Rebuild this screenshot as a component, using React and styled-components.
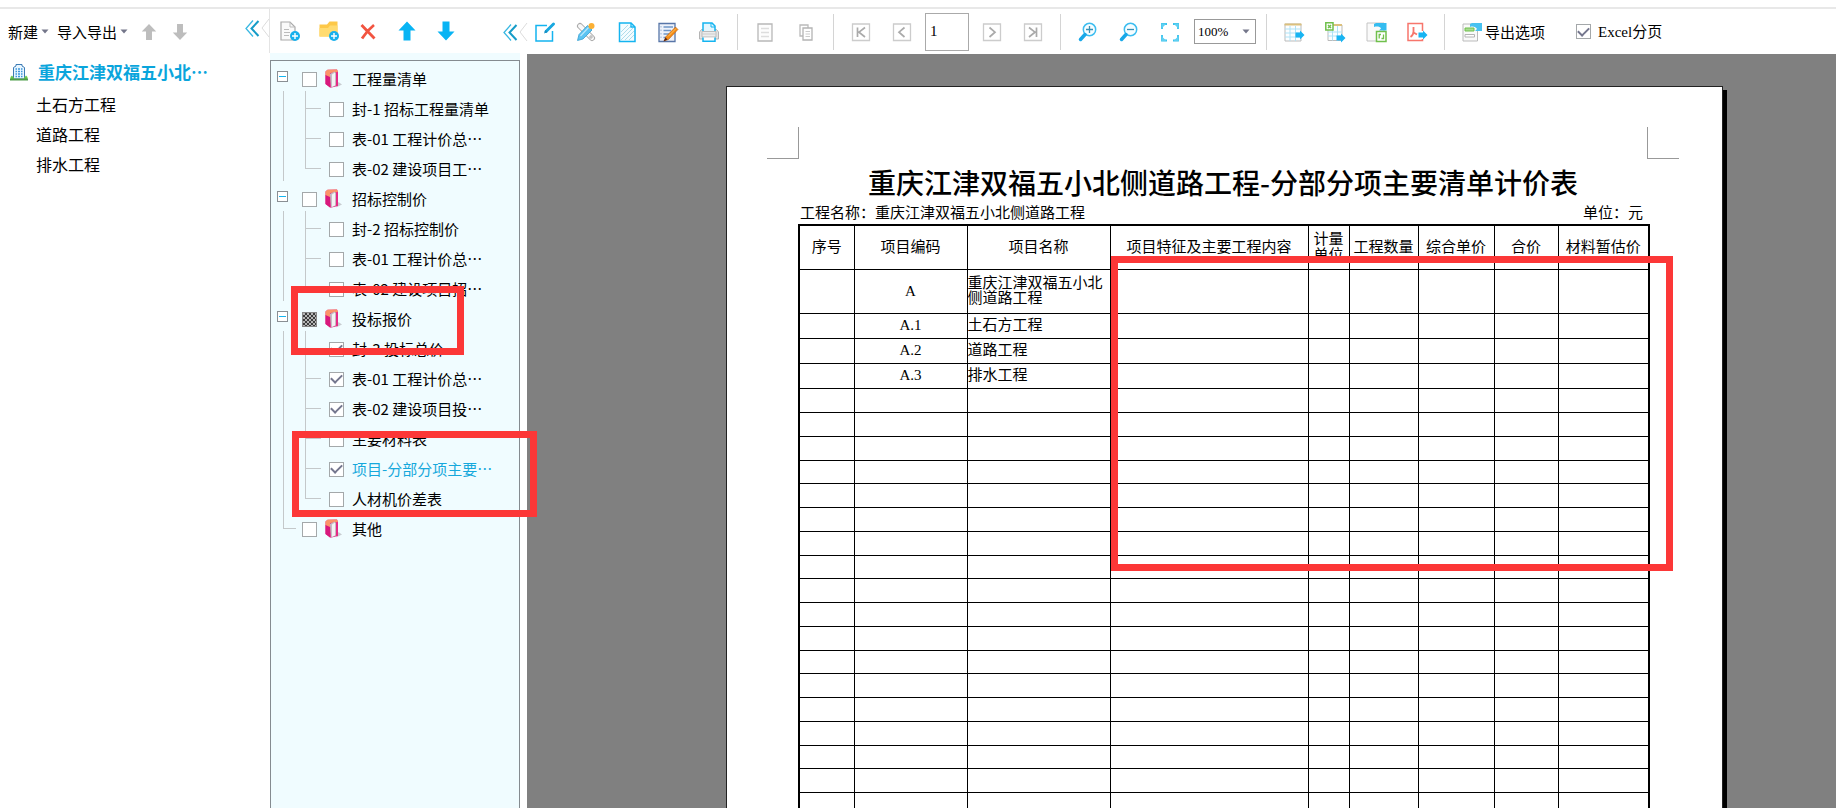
import React from "react";
import styled, { createGlobalStyle, css } from "styled-components";

const sans = `"Noto Sans CJK SC", sans-serif`;
const serif = `"Liberation Serif", "Noto Sans CJK SC", serif`;
const blue = "#14b4f0";
const lineGray = "#c4c8ca";

const GlobalStyle = createGlobalStyle`
    * {
        box-sizing: border-box;
    }
    body {
        margin: 0;
        background: #fff;
        color: #000;
        font: 15px/20px ${sans};
    }
    button, input, select {
        font: inherit;
        color: inherit;
    }
    ul {
        list-style: none;
        margin: 0;
        padding: 0;
    }
`;

const Shell = styled.div`
    display: flex;
    flex-direction: column;
    height: 100vh;
    overflow: hidden;
`;

const TopStrip = styled.header`
    flex: none;
    height: 9px;
    border-bottom: 2px solid #e8e8e8;
`;

const Workspace = styled.div`
    display: flex;
    flex: 1;
    min-height: 0;
`;

const Toolbar = styled.div`
    display: flex;
    flex: none;
    align-items: center;
    height: 45px;
`;

const IconButton = styled.button`
    display: flex;
    flex: none;
    width: 20px;
    height: 20px;
    padding: 0;
    border: 0;
    background: none;
`;

const TextButton = styled.button`
    display: flex;
    align-items: center;
    gap: 3px;
    padding: 0;
    border: 0;
    background: none;
    white-space: nowrap;
`;

const Svg = styled.svg`
    display: block;
    flex: none;
    overflow: visible;
    fill: none;
`;

const Check = styled.input.attrs({ type: "checkbox" })`
    appearance: none;
    flex: none;
    width: 15px;
    height: 15px;
    margin: 0;
    border: 1px solid #a4a8aa;
    background: #fff;
    display: grid;
    place-items: center;
    &:checked::after {
        content: "";
        width: 9px;
        height: 5px;
        margin-bottom: 3px;
        border-left: 2px solid #74768e;
        border-bottom: 2px solid #74768e;
        transform: rotate(-45deg);
    }
    ${props => props.$mixed && css`
        border-color: #888;
        background: repeating-conic-gradient(#3c3c3c 0 25%, #b4b4b4 0 50%) 0 0 / 4px 4px;
    `}
`;

/* project panel */

const ProjectPanel = styled.aside`
    flex: 0 0 269px;
    min-width: 0;
`;

const ProjectToolbar = styled(Toolbar)`
    padding-left: 8px;
    gap: 8px;
`;

const ArrowPair = styled.div`
    display: flex;
    gap: 11px;
    margin-left: 3px;
`;

const Collapse = styled(IconButton)`
    width: 24px;
    margin-left: auto;
    align-self: ${props => props.$top ? "flex-start" : "center"};
    margin-top: ${props => props.$top ? "10px" : "4px"};
`;

const ProjectTitle = styled.div`
    display: flex;
    align-items: center;
    gap: 10px;
    height: 35px;
    padding-left: 10px;
    font-size: 17px;
    font-weight: 700;
    color: #0aa5dc;
    white-space: nowrap;
`;

const ProjectItem = styled.li`
    padding-left: 36px;
    font-size: 16px;
    line-height: 30px;
`;

/* report tree panel */

const ReportPanel = styled.aside`
    display: flex;
    flex-direction: column;
    flex: 0 0 258px;
    position: relative;
    z-index: 1;
`;

const ReportToolbar = styled(Toolbar)`
    height: 44px;
    padding-left: 10px;
    gap: 19px;
    border-left: 1px solid #e4e4e4;
`;

const Tree = styled.div`
    flex: 1;
    position: relative;
    margin: 0 7px 0 1px;
    border: 1px solid #858b90;
    border-bottom: 0;
    background: #f0fcff;
`;

const TreeBand = styled.div`
    flex: none;
    height: 7px;
    margin: 0 7px 0 1px;
    background: #f0fcff;
`;

const Row = styled.div`
    display: flex;
    align-items: center;
    height: 30px;
    padding-left: ${props => props.$head ? "6px" : "12px"};
`;

const Toggle = styled.button`
    display: grid;
    place-items: center;
    flex: none;
    width: 11px;
    height: 11px;
    margin-right: 14px;
    padding: 0;
    border: 1px solid #8a8f94;
    background: #fff;
    &::after {
        content: "";
        width: 7px;
        height: 1px;
        background: ${blue};
    }
`;

const Trunk = styled.span`
    flex: none;
    align-self: stretch;
    width: 22px;
    border-left: 1px solid ${lineGray};
`;

const Elbow = styled.span`
    flex: none;
    align-self: stretch;
    width: ${props => props.$short ? "13px" : "16px"};
    margin-right: ${props => props.$short ? "6px" : "8px"};
    &::before, &::after {
        content: "";
        display: block;
        border-left: 1px solid ${lineGray};
    }
    &::before {
        height: 17px;
        border-bottom: 1px solid ${lineGray};
    }
    &::after {
        height: ${props => props.$last ? "0" : "13px"};
    }
`;

const Entry = styled.label`
    display: flex;
    align-items: center;
    gap: 8px;
    padding-top: 6px;
    color: ${props => props.$active ? "#16a8dc" : "inherit"};
    white-space: nowrap;
`;

const EntryName = styled.span`
    padding-left: ${props => props.$head ? "2px" : "0"};
`;

const Marker = styled.div`
    position: absolute;
    border: 7px solid #fc3737;
    pointer-events: none;
    ${props => props.$area}
`;

/* preview */

const Preview = styled.main`
    display: flex;
    flex-direction: column;
    flex: 1;
    min-width: 0;
`;

const ToolGroup = styled.div`
    display: flex;
    align-items: center;
    gap: 21px;
    height: 36px;
    padding: 0 17px;
    border-left: 1px solid #d4d4d4;
    &:first-child {
        padding: 0 18px 0 8px;
        border-left: 0;
    }
`;

const PageInput = styled.input`
    width: 44px;
    height: 38px;
    margin: 0 -8px;
    padding: 0 4px;
    border: 1px solid #aaa;
    font: 15px/20px ${serif};
`;

const ZoomBox = styled.div`
    display: grid;
    align-items: center;
    width: 62px;
    margin: 0 -7px;
    > * {
        grid-area: 1 / 1;
    }
    > svg {
        justify-self: end;
        margin-right: 6px;
        pointer-events: none;
    }
`;

const ZoomSelect = styled.select`
    appearance: none;
    height: 25px;
    padding: 0 3px;
    border: 1px solid #999;
    border-radius: 0;
    background: #fff;
    font: 13px/20px ${serif};
`;

const CheckLabel = styled.label`
    display: flex;
    align-items: center;
    gap: 7px;
    margin-left: 10px;
    font-family: ${serif};
    white-space: nowrap;
`;

const Canvas = styled.div`
    display: flex;
    flex: 1;
    align-items: flex-start;
    min-height: 0;
    padding: 32px 113px 0 199px;
    background: #808080;
    overflow: hidden;
`;

const Paper = styled.article`
    flex: 1;
    min-width: 0;
    border: 1px solid #222;
    background: #fff;
    box-shadow: 4px 4px 0 #000;
`;

const CropMarks = styled.div`
    display: flex;
    justify-content: space-between;
    padding: 40px 43px 0 40px;
`;

const CropMark = styled.span`
    width: 32px;
    height: 32px;
    border-bottom: 1px solid #999;
    ${props => props.$right ? "border-left" : "border-right"}: 1px solid #999;
`;

const Sheet = styled.div`
    position: relative;
    padding: 5px 74px 0 71px;
`;

const SheetTitle = styled.h1`
    margin: 0;
    font-size: 28px;
    font-weight: 500;
    line-height: 36px;
    text-align: center;
    white-space: nowrap;
`;

const SheetInfo = styled.div`
    display: flex;
    justify-content: space-between;
    padding: 0 5px 0 2px;
    line-height: 24px;
`;

const Table = styled.table`
    width: 100%;
    table-layout: fixed;
    border-collapse: collapse;
    border: 2px solid #000;
    font: 15px/15px ${serif};
    th, td {
        padding: 0;
        border: 1px solid #000;
        font-weight: 400;
    }
    th {
        line-height: 16px;
    }
`;

const Tr = styled.tr`
    height: ${props => props.$height}px;
`;

const Td = styled.td`
    text-align: ${props => props.$align || "left"};
`;

const Icon = ({ children, ...rest }) => (
    <Svg width="20" height="20" viewBox="0 0 20 20" aria-hidden="true" {...rest}>{children}</Svg>
);

const Caret = () => (
    <Svg width="8" height="5" viewBox="0 0 8 5" aria-hidden="true"><path d="M0.5 0.5h7L4 4.5z" fill="#74768a" /></Svg>
);

const Arrow = ({ down, color, small }) => (
    <Icon>
        <g transform={`${down ? "rotate(180 10 10)" : ""} ${small ? "translate(1.5 1.5) scale(.85)" : ""}`}>
            <path d="M10 0.5L18.5 9.5H13.5V19.5H6.5V9.5H1.5z" fill={color} />
        </g>
    </Icon>
);

const Chevrons = () => (
    <Svg width="24" height="20" viewBox="0 0 24 20" aria-hidden="true">
        <path d="M8 1.5L1 9.5L8 17.5" stroke="#3ab8e2" strokeWidth="1.3" />
        <path d="M13.5 2L6.5 9.5L13.5 17" stroke="#159cc8" strokeWidth="2" />
        <path d="M24 0L17 9L24 18" stroke="#dcdcdc" />
    </Svg>
);

const Building = () => (
    <Svg width="18" height="18" viewBox="0 0 18 18" aria-hidden="true">
        <path d="M3.5 16V4.5L6 3V1.5h6V3l2.500 1.500V16z" fill="#e8f6ff" stroke="#3c7ab4" />
        <path d="M5.500 6h7M5.500 8.500h7M5.500 11h7M5.500 13.500h7" stroke="#3c96dc" strokeWidth="1.500" />
        <path d="M7.500 4v11M10.500 4v11" stroke="#e8f6ff" />
        <path d="M0.500 16.500V14l1.500-1.500L4 15v1.500zM17.500 16.500V14L16 12.500L14 15v1.500z" fill="#6cc84c" />
        <path d="M0 16.500h18" stroke="#4c9c48" strokeWidth="2" />
    </Svg>
);

const Folder = () => (
    <Svg width="17" height="20" viewBox="0 0 17 20" aria-hidden="true">
        <path d="M11 18.500L17 15.500L13.500 13z" fill="#c8ccd0" />
        <path d="M0.500 2.500L2.500 0.800L12 0.500L13 3V17L5.500 18.800L0.500 15z" fill="#e62a86" />
        <path d="M0.500 2.500L2.500 0.800L12 0.500L13 3L5 4V9L0.500 7z" fill="#fb9468" />
        <path d="M0.500 6L5 8V18.500L0.500 15z" fill="#d8187c" />
        <path d="M5 5L9.500 2.500L11 4V16.500L6 18.500z" fill="#c4c0c4" />
        <path d="M7 5.500L10 3.500V16.500L7 17.800z" fill="#f4f2f4" />
    </Svg>
);

const PlusBadge = () => (
    <>
        <circle cx="15" cy="15" r="5" fill="#18b0ec" />
        <path d="M12 15h6M15 12v6" stroke="#fff" strokeWidth="1.400" />
    </>
);

const FileAdd = () => (
    <Icon>
        <path d="M1 1h9l5 5v13H1z" fill="#fafafa" stroke="#aaa" strokeWidth="1.200" />
        <path d="M10 1v5h5M4 8.500h5M4 11.500h6M4 14.500h5" stroke="#bbb" />
        <PlusBadge />
    </Icon>
);

const FolderAdd = () => (
    <Icon>
        <path d="M0.500 3.500H8L10.500 0.500H18.500V15.500H0.500z" fill="#fdc848" />
        <path d="M0.500 7H9L11 4.500H18.500V15.500H0.500z" fill="#ffdb70" />
        <PlusBadge />
    </Icon>
);

const Remove = () => (
    <Icon>
        <path d="M3.500 4L16.500 17.500M16 4C11 8 7.500 12 4 17.500" stroke="#f25440" strokeWidth="2.800" />
    </Icon>
);

const EditBox = () => (
    <Icon>
        <path d="M12 3.500H1V19H17.500V9" stroke={blue} strokeWidth="1.500" />
        <path d="M18.500 2L11 9.500" stroke="#18a8e0" strokeWidth="3" strokeLinecap="round" />
        <path d="M10.500 8L12.500 10L9 11.500z" fill="#168cc0" />
    </Icon>
);

const Tools = () => (
    <Icon>
        <path d="M4 4L16 16" stroke="#aaa" strokeWidth="6" strokeLinecap="round" />
        <path d="M4 4L16 16" stroke="#f8f8f8" strokeWidth="4" strokeLinecap="round" />
        <circle cx="15" cy="15" r="1.200" stroke="#aaa" />
        <path d="M1.500 18.500L3 12.500L11.500 3.500L16 8L7 17z" fill="#5cc4f2" stroke="#38a0d0" strokeWidth=".8" />
        <path d="M4.500 14L12.500 5.500" stroke="#b8e8fc" strokeWidth="1.200" />
        <circle cx="15.500" cy="4" r="3" fill="#fbb034" />
    </Icon>
);

const Hatch = () => (
    <Icon>
        <path d="M2.500 1H14L18 5V19.500H2.500z" fill="#f4fcff" stroke={blue} strokeWidth="1.500" />
        <path d="M4 10L11 3M4 14L14 4M4 18L16 6M8 18L17 9M12 18L17 13" stroke="#a8d8e8" strokeWidth=".9" />
        <path d="M14 1V5H18" stroke={blue} strokeWidth="1.300" />
    </Icon>
);

const Notepad = () => (
    <Icon>
        <path d="M1 1.500H17V19.500H1z" fill="#eef2fa" stroke="#5876a8" strokeWidth="1.300" />
        <path d="M5.500 5H15M5.500 8.500H13M5.500 12H11M5.500 15.500H8" stroke="#6f96c8" strokeWidth="1.300" />
        <path d="M3 4v14" stroke="#9bb0d0" strokeDasharray="1.500 2" />
        <path d="M6 19L8 14.500L17.500 5L20 7.500L10.500 17.500z" fill="#f58c14" stroke="#a8500c" strokeWidth=".5" />
        <path d="M10 14.500L18 6.500" stroke="#fcc060" />
        <path d="M5.500 19.500L7.500 15.500L9.500 17.500z" fill="#552210" />
    </Icon>
);

const Printer = () => (
    <Icon>
        <path d="M2.500 7.500H17.500L19.500 10V17H0.500V10z" fill="#e4e4e4" stroke="#b4b4b4" />
        <path d="M4 12V1H13L16 4V12" fill="#e4f6fe" stroke={blue} strokeWidth="1.500" />
        <path d="M12 1V5H16" stroke={blue} />
        <path d="M3 9.500H17V15H3z" fill="#ececec" stroke="#bbb" />
        <path d="M3 12H17" stroke="#ccc" />
        <path d="M4 15.500V19.200H16V15.500" fill="#fff" stroke={blue} strokeWidth="1.500" />
    </Icon>
);

const SinglePage = () => (
    <Icon>
        <path d="M3 2H17V19H3z" fill="#fdfdfd" stroke="#b8b8b8" strokeWidth="1.300" />
        <path d="M6 6.500H14M6 10.500H14M6 14.500H14" stroke="#ddd" strokeWidth="1.300" />
    </Icon>
);

const Copies = () => (
    <Icon>
        <path d="M4 3H12V14H4z" fill="#fff" stroke="#bbb" strokeWidth="1.300" />
        <path d="M7 6H16V18H7z" fill="#fff" stroke="#b4b4b4" strokeWidth="1.300" />
        <path d="M9.500 9.500H14M9.500 12H14M9.500 14.500H14" stroke="#ccc" />
    </Icon>
);

const Nav = ({ d }) => (
    <Icon>
        <path d="M1.500 2H18.500V18.500H1.500z" stroke="#ccc" strokeWidth="1.300" />
        <path d={d} stroke="#aaa" strokeWidth="1.700" />
    </Icon>
);

const Magnifier = ({ plus }) => (
    <Icon>
        <circle cx="11.500" cy="7.500" r="6.200" fill="#f6fdff" stroke="#3cbdf0" strokeWidth="1.500" />
        <path d={plus ? "M8 7.500h7M11.500 4v7" : "M8 7.500h7"} stroke="#3890b4" strokeWidth="1.300" />
        <path d="M7 12.500L2.500 17.500" stroke="#18a8e8" strokeWidth="3.500" strokeLinecap="round" />
    </Icon>
);

const Fit = () => (
    <Icon>
        <path d="M2 7V2H7M13 2H18V7M18 13V18.500H13M7 18.500H2V13" stroke="#34c0ec" strokeWidth="1.800" />
        <path d="M1.500 1.500h5l-5 5zM18.500 1.500v5l-5-5zM18.500 19h-5l5-5zM1.500 19v-5l5 5z" fill="#5ed0f2" />
    </Icon>
);

const MiniArrow = () => <path d="M11.500 10.500H16V8.500L20.500 13L16 17.500V15.500H11.500z" fill="#18b4f2" />;

const ExportTable = () => (
    <Icon>
        <path d="M1 2H17V19H1z" fill="#fcfeff" stroke="#bbb" />
        <path d="M1 7H17M1 11H17M1 15H17M6 4V19M11.500 4V19" stroke="#aee2f6" />
        <path d="M0.500 2.500H17.500" stroke="#dcc07c" strokeWidth="2" />
        <MiniArrow />
    </Icon>
);

const ExportExcel = () => (
    <Icon>
        <path d="M3 3H17V18.500H3z" fill="#fcfeff" stroke="#bbb" />
        <path d="M3 10H17M3 14H17M7.500 8V18.500M12.500 4V18.500" stroke="#aee2f6" />
        <path d="M8 3H17" stroke="#dcc07c" strokeWidth="2" />
        <path d="M0.800 0.800H8V8H0.800z" fill="#fff" stroke="#70c04c" strokeWidth="1.500" />
        <path d="M3 3l3 3M6 3l-3 3" stroke="#70c04c" strokeWidth="1.500" />
        <g transform="translate(0 3)"><MiniArrow /></g>
    </Icon>
);

const ExportSheet = () => (
    <Icon>
        <path d="M1 1H18V19H1z" fill="#fafafa" stroke="#c4c4c4" />
        <path d="M8 2L10 1H20.500V8.500H13L15 6.500C14 4.500 11 4 8 5z" fill="#34bcf0" />
        <path d="M10.500 9.500H20V19.500H10.500z" fill="#fff" stroke="#70c04c" strokeWidth="1.500" />
        <path d="M13.200 16.500V12.500H15M17.500 12.500V16.500H15.500" stroke="#70c04c" strokeWidth="1.300" />
    </Icon>
);

const ExportPdf = () => (
    <Icon>
        <path d="M15.500 9V1.500H1V18.500H15.500V17" stroke="#f7766c" strokeWidth="1.500" />
        <path d="M6.500 5V9.500C6.500 12 5 14 3.500 15M6.500 10.500L10 12.500" stroke="#f7766c" strokeWidth="1.800" />
        <MiniArrow />
    </Icon>
);

const ExportOptions = () => (
    <Icon>
        <path d="M1 2H15.500V19H1z" fill="#fafafa" stroke="#bbb" />
        <path d="M3 6H12V9H3z" fill="#a8dc90" stroke="#70c04c" />
        <path d="M3 12.500H12.500V15H3z" fill="#fff" stroke="#b4b4b4" />
        <path d="M8 2L10 1H20V9H13L15 7C14 5 11 4 8 5z" fill="#48c2f0" />
    </Icon>
);

const projects = ["土石方工程", "道路工程", "排水工程"];

const groups = [
    {
        name: "工程量清单",
        items: [["封-1 招标工程量清单"], ["表-01 工程计价总…"], ["表-02 建设项目工…"]]
    },
    {
        name: "招标控制价",
        items: [["封-2 招标控制价"], ["表-01 工程计价总…"], ["表-02 建设项目招…"]]
    },
    {
        name: "投标报价",
        mixed: true,
        items: [
            ["封-3 投标总价", true],
            ["表-01 工程计价总…", true],
            ["表-02 建设项目投…", true],
            ["主要材料表"],
            ["项目-分部分项主要…", true, true],
            ["人材机价差表"]
        ]
    }
];

const columns = [
    ["序号", 55],
    ["项目编码", 113],
    ["项目名称", 143],
    ["项目特征及主要工程内容", 198],
    ["计量单位", 41],
    ["工程数量", 69],
    ["综合单价", 76],
    ["合价", 64],
    ["材料暂估价", 91]
];

const lines = [
    ["A", "重庆江津双福五小北侧道路工程", 44],
    ["A.1", "土石方工程", 25],
    ["A.2", "道路工程", 25],
    ["A.3", "排水工程", 25],
    // blank rows fill the sheet, every fourth one is a pixel shorter
    ...Array.from({ length: 20 }, (_, i) => ["", "", i % 4 === 3 ? 23 : 24])
];

const reportTools = [
    ["新建报表", <FileAdd />],
    ["新建文件夹", <FolderAdd />],
    ["删除", <Remove />],
    ["上移", <Arrow color="#08b4f4" />],
    ["下移", <Arrow down color="#08b4f4" />]
];

const Tool = ({ label, children }) => (
    <IconButton type="button" aria-label={label}>{children}</IconButton>
);

const TreeGroup = ({ name, mixed, items }) => (
    <li>
        <Row $head>
            <Toggle type="button" aria-label={name} />
            <Entry>
                <Check $mixed={mixed} />
                <Folder />
                <EntryName $head>{name}</EntryName>
            </Entry>
        </Row>
        <ul>
            {items.map(([text, checked, active], i) => (
                <Row as="li" key={text}>
                    <Trunk />
                    <Elbow $last={i === items.length - 1} />
                    <Entry $active={active}>
                        <Check defaultChecked={checked} />
                        <EntryName>{text}</EntryName>
                    </Entry>
                </Row>
            ))}
        </ul>
    </li>
);

const PriceTable = () => (
    <Table>
        <colgroup>
            {columns.map(([name, width]) => <col key={name} width={width} />)}
        </colgroup>
        <thead>
            <Tr $height={44}>
                {columns.map(([name]) => (
                    <th key={name}>{name === "计量单位" ? <>计量<br />单位</> : name}</th>
                ))}
            </Tr>
        </thead>
        <tbody>
            {lines.map(([code, name, height], i) => (
                <Tr key={i} $height={height}>
                    <Td />
                    <Td $align="center">{code}</Td>
                    <Td>{name}</Td>
                    {columns.slice(3).map(([key]) => <Td key={key} />)}
                </Tr>
            ))}
        </tbody>
    </Table>
);

const App = () => (
    <Shell>
        <GlobalStyle />
        <TopStrip />
        <Workspace>
            <ProjectPanel>
                <ProjectToolbar>
                    <TextButton type="button">新建<Caret /></TextButton>
                    <TextButton type="button">导入导出<Caret /></TextButton>
                    <ArrowPair>
                        <Tool label="上移"><Arrow small color="#bdbdbd" /></Tool>
                        <Tool label="下移"><Arrow small down color="#bdbdbd" /></Tool>
                    </ArrowPair>
                    <Collapse type="button" aria-label="收起" $top><Chevrons /></Collapse>
                </ProjectToolbar>
                <ProjectTitle><Building />重庆江津双福五小北…</ProjectTitle>
                <ul>
                    {projects.map(name => <ProjectItem key={name}>{name}</ProjectItem>)}
                </ul>
            </ProjectPanel>
            <ReportPanel>
                <ReportToolbar>
                    {reportTools.map(([label, icon]) => <Tool key={label} label={label}>{icon}</Tool>)}
                    <Collapse type="button" aria-label="收起"><Chevrons /></Collapse>
                </ReportToolbar>
                <TreeBand />
                <Tree>
                    <ul>
                        {groups.map(group => <TreeGroup key={group.name} {...group} />)}
                        <Row as="li">
                            <Elbow $short $last />
                            <Entry>
                                <Check />
                                <Folder />
                                <EntryName $head>其他</EntryName>
                            </Entry>
                        </Row>
                    </ul>
                    <Marker $area="left: 20px; top: 225px; width: 173px; height: 69px;" />
                    <Marker $area="left: 21px; top: 370px; width: 245px; height: 86px;" />
                </Tree>
            </ReportPanel>
            <Preview>
                <Toolbar>
                    <ToolGroup>
                        <Tool label="编辑"><EditBox /></Tool>
                        <Tool label="设置"><Tools /></Tool>
                        <Tool label="页面"><Hatch /></Tool>
                        <Tool label="批注"><Notepad /></Tool>
                        <Tool label="打印"><Printer /></Tool>
                    </ToolGroup>
                    <ToolGroup>
                        <Tool label="单页"><SinglePage /></Tool>
                        <Tool label="多页"><Copies /></Tool>
                    </ToolGroup>
                    <ToolGroup>
                        <Tool label="首页"><Nav d="M6.500 5.500V15M14 5.500L8 10.200L14 15M7 10.200H9" /></Tool>
                        <Tool label="上一页"><Nav d="M12.500 5.500L7 10.200L12.500 15" /></Tool>
                        <PageInput aria-label="页码" defaultValue="1" />
                        <Tool label="下一页"><Nav d="M7.500 5.500L13 10.200L7.500 15" /></Tool>
                        <Tool label="末页"><Nav d="M13.500 5.500V15M6 5.500L12 10.200L6 15M11 10.200H13" /></Tool>
                    </ToolGroup>
                    <ToolGroup>
                        <Tool label="放大"><Magnifier plus /></Tool>
                        <Tool label="缩小"><Magnifier /></Tool>
                        <Tool label="全屏"><Fit /></Tool>
                        <ZoomBox>
                            <ZoomSelect aria-label="缩放">
                                <option>100%</option>
                            </ZoomSelect>
                            <Caret />
                        </ZoomBox>
                    </ToolGroup>
                    <ToolGroup>
                        <Tool label="导出"><ExportTable /></Tool>
                        <Tool label="导出Excel"><ExportExcel /></Tool>
                        <Tool label="批量导出"><ExportSheet /></Tool>
                        <Tool label="导出PDF"><ExportPdf /></Tool>
                    </ToolGroup>
                    <ToolGroup>
                        <TextButton type="button"><ExportOptions />导出选项</TextButton>
                        <CheckLabel><Check defaultChecked />Excel分页</CheckLabel>
                    </ToolGroup>
                </Toolbar>
                <Canvas>
                    <Paper>
                        <CropMarks>
                            <CropMark />
                            <CropMark $right />
                        </CropMarks>
                        <Sheet>
                            <SheetTitle>重庆江津双福五小北侧道路工程-分部分项主要清单计价表</SheetTitle>
                            <SheetInfo>
                                <span>工程名称：重庆江津双福五小北侧道路工程</span>
                                <span>单位：元</span>
                            </SheetInfo>
                            <PriceTable />
                            <Marker $area="left: 384px; right: 49px; top: 97px; height: 315px;" />
                        </Sheet>
                    </Paper>
                </Canvas>
            </Preview>
        </Workspace>
    </Shell>
);

export default App;
